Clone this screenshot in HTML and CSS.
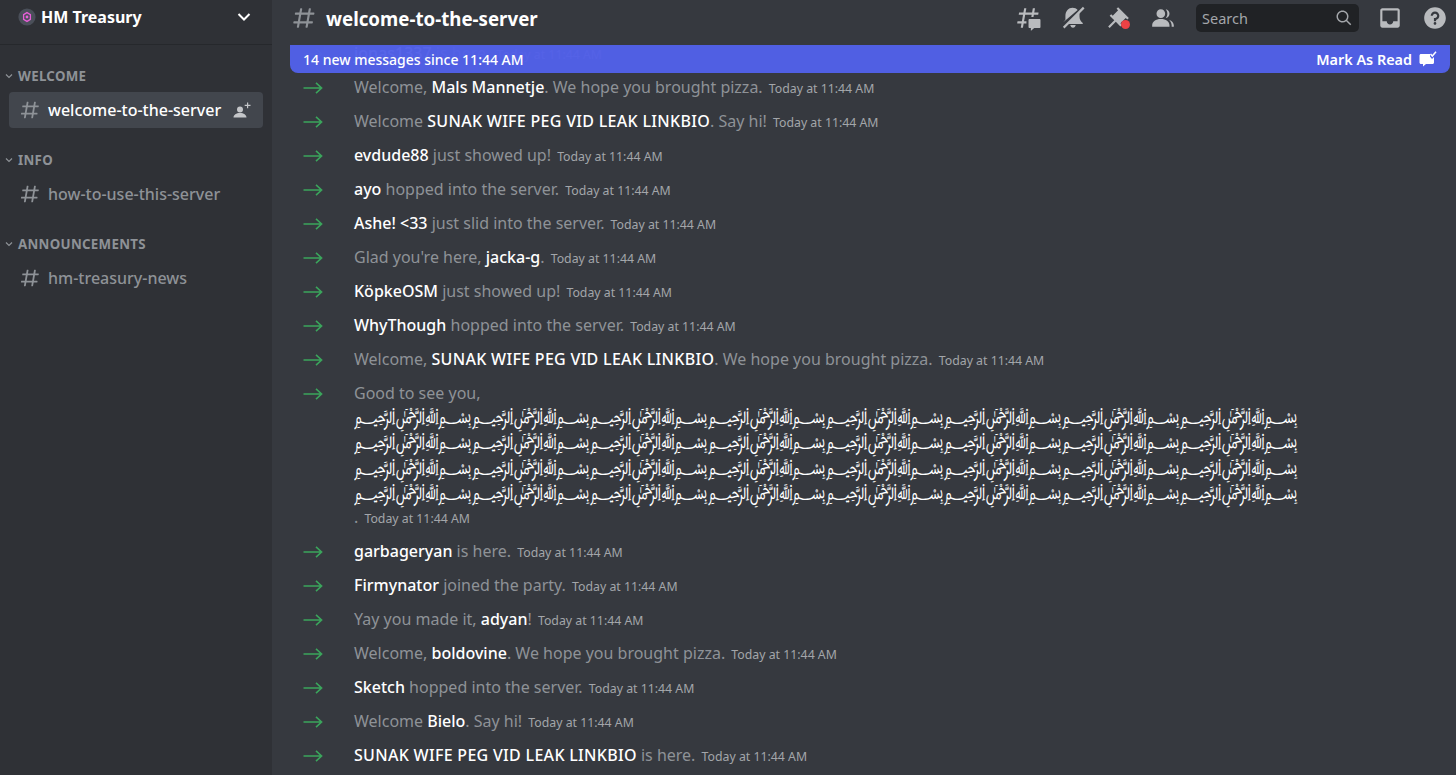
FILE: index.html
```html
<!DOCTYPE html>
<html lang="en">
<head>
    <meta charset="UTF-8">
    <title>welcome-to-the-server</title>
    <link rel="stylesheet" href="styles.css">
</head>
<body>
    <svg width="0" height="0" class="defs">
        <symbol id="hash" viewBox="0 0 24 24"><path fill="currentColor" fill-rule="evenodd" d="M5.88657 21C5.57547 21 5.3399 20.7189 5.39427 20.4126L6.00001 17H2.59511C2.28449 17 2.04905 16.7198 2.10259 16.4138L2.27759 15.4138C2.31946 15.1746 2.52722 15 2.77011 15H6.35001L7.41001 9H4.00511C3.69449 9 3.45905 8.71977 3.51259 8.41381L3.68759 7.41381C3.72946 7.17456 3.93722 7 4.18011 7H7.76001L8.39677 3.41262C8.43914 3.17391 8.64664 3 8.88907 3H9.87344C10.1845 3 10.4201 3.28107 10.3657 3.58738L9.76001 7H15.76L16.3968 3.41262C16.4391 3.17391 16.6466 3 16.8891 3H17.8734C18.1845 3 18.4201 3.28107 18.3657 3.58738L17.76 7H21.1649C21.4755 7 21.711 7.28023 21.6574 7.58619L21.4824 8.58619C21.4406 8.82544 21.2328 9 20.9899 9H17.41L16.35 15H19.7549C20.0655 15 20.301 15.2802 20.2474 15.5862L20.0724 16.5862C20.0306 16.8254 19.8228 17 19.5799 17H16L15.3632 20.5874C15.3209 20.8261 15.1134 21 14.8709 21H13.8866C13.5755 21 13.3399 20.7189 13.3943 20.4126L14 17H8.00001L7.36325 20.5874C7.32088 20.8261 7.11337 21 6.87094 21H5.88657ZM9.41045 9L8.35045 15H14.3504L15.4104 9H9.41045Z"/></symbol>
        <symbol id="arrow" viewBox="0 0 20 12"><path fill="none" stroke="currentColor" stroke-width="1.6" d="M0.5 6H18.5M13 0.8L18.6 6L13 11.2"/></symbol>
        <symbol id="caret" viewBox="0 0 8 6"><path fill="none" stroke="currentColor" stroke-width="1.2" d="M1 1.5L4 4.5L7 1.5"/></symbol>
    </svg>

    <div class="app">
        <aside class="sidebar">
            <div class="guild-header">
                <svg class="guild-icon" viewBox="0 0 18 18" width="18" height="18">
                    <circle cx="9" cy="9" r="8.6" fill="#4a4f59"/>
                    <path fill="none" stroke="#e85fd8" stroke-width="1.3" d="M9 4.6L12.4 6.6V11.4L9 13.4L5.6 11.4V6.6Z"/>
                    <circle cx="9" cy="9" r="1.4" fill="#e85fd8"/>
                </svg>
                <span class="guild-name">HM Treasury</span>
                <svg class="guild-chevron" viewBox="0 0 14 10" width="14" height="10"><path fill="none" stroke="#fff" stroke-width="2" d="M1.5 2L7 7.5L12.5 2"/></svg>
            </div>

            <div class="category"><svg class="caret"><use href="#caret"/></svg>WELCOME</div>
            <div class="channel active">
                <svg class="channel-hash"><use href="#hash"/></svg>
                <span class="channel-name">welcome-to-the-server</span>
                <svg class="invite" viewBox="0 0 18 16" width="18" height="16"><path fill="#c4c6c9" d="M7 4.5a3 3 0 1 1 0 6a3 3 0 0 1 0-6ZM0.5 15.5C0.5 12.8 3.2 11 7 11s6.5 1.800 6.500 4.500ZM14 0.500h1.200v2.300h2.300v1.200h-2.300v2.300H14V4H11.700V2.800H14Z"/></svg>
            </div>

            <div class="category"><svg class="caret"><use href="#caret"/></svg>INFO</div>
            <div class="channel">
                <svg class="channel-hash"><use href="#hash"/></svg>
                <span class="channel-name">how-to-use-this-server</span>
            </div>

            <div class="category"><svg class="caret"><use href="#caret"/></svg>ANNOUNCEMENTS</div>
            <div class="channel">
                <svg class="channel-hash"><use href="#hash"/></svg>
                <span class="channel-name">hm-treasury-news</span>
            </div>
        </aside>

        <main class="main">
            <header class="topbar">
                <svg class="topbar-hash"><use href="#hash"/></svg>
                <h1 class="topbar-title">welcome-to-the-server</h1>
                <div class="toolbar">
                    <svg class="tool" viewBox="0 0 24 24"><path fill="currentColor" d="M5.43309 21C5.35842 21 5.30189 20.9325 5.31494 20.859L5.99991 17H2.14274C2.06819 17 2.01168 16.9327 2.02453 16.8593L2.33253 15.0993C2.34258 15.0419 2.39244 15 2.45074 15H6.34991L7.40991 9H3.55274C3.47819 9 3.42168 8.93274 3.43453 8.85931L3.74253 7.09931C3.75258 7.04189 3.80244 7 3.86074 7H7.75991L8.45234 3.09903C8.46251 3.04174 8.51231 3 8.57049 3H10.3267C10.4014 3 10.4579 3.06746 10.4449 3.14097L9.75991 7H15.7599L16.4523 3.09903C16.4625 3.04174 16.5123 3 16.5705 3H18.3267C18.4014 3 18.4579 3.06746 18.4449 3.14097L17.7599 7H21.6171C21.6916 7 21.7481 7.06725 21.7353 7.14069L21.4273 8.90069C21.4172 8.95811 21.3674 9 21.3091 9H17.4099L17.0495 11.04H15.05L15.4104 9H9.41035L8.35035 15H10.5599V17H7.99991L7.30749 20.901C7.29732 20.9583 7.24752 21 7.18934 21H5.43309Z"/><path fill="currentColor" d="M13.4399 12.96C12.9097 12.96 12.4799 13.3898 12.4799 13.92V20.2213C12.4799 20.7515 12.9097 21.1813 13.4399 21.1813H14.3999C14.5325 21.1813 14.6399 21.2887 14.6399 21.4213V23.4597C14.6399 23.6677 14.8865 23.7773 15.0408 23.6378L17.4858 21.4289C17.6622 21.2695 17.8916 21.1813 18.1294 21.1813H22.5599C23.0901 21.1813 23.5199 20.7515 23.5199 20.2213V13.92C23.5199 13.3898 23.0901 12.96 22.5599 12.96H13.4399Z"/></svg>
                    <svg class="tool" viewBox="0 0 24 24"><path fill="currentColor" d="M21.178 1.707L22.592 3.121L4.121 21.593L2.707 20.178Z"/><path fill="currentColor" d="M18 10.500V7.100L7.600 17.500H21V16.500C19.200 15 18 13 18 10.500ZM16.300 4.600C15.200 3.300 13.500 2.500 11.500 2.500C8 2.500 5 5.500 5 10V13.500L3 16L16.300 4.600ZM9.500 18.500C9.700 20 10.700 21 12 21C13.300 21 14.300 20 14.500 18.500Z"/></svg>
                    <span class="pin-wrap">
                        <svg class="tool" viewBox="0 0 24 24"><path fill="currentColor" d="M22 12L12.101 2.101L10.686 3.514L12.101 4.929L7.151 9.878V9.880L5.736 8.465L4.322 9.880L8.565 14.122L2.908 19.778L4.322 21.192L9.979 15.536L14.222 19.778L15.636 18.364L14.222 16.950L19.171 12H19.172L20.586 13.414L22 12Z"/></svg>
                        <span class="pin-dot"></span>
                    </span>
                    <svg class="tool" viewBox="0 0 24 24"><path fill="currentColor" d="M14 8.006C14 10.211 12.206 12.006 10 12.006C7.795 12.006 6 10.211 6 8.006C6 5.801 7.794 4.006 10 4.006C12.206 4.006 14 5.801 14 8.006ZM2 19.006C2 15.473 5.29 13.006 10 13.006C14.711 13.006 18 15.473 18 19.006V20.006H2V19.006Z"/><path fill="currentColor" d="M20 20.006H22V19.006C22 16.443 20.270 14.442 17.521 13.535C19.062 14.913 20 16.806 20 19.006V20.006Z"/><path fill="currentColor" d="M14.883 11.908C16.666 11.504 18 9.908 18 8.006C18 5.969 16.469 4.282 14.497 4.037C15.432 5.095 16 6.485 16 8.006C16 9.449 15.489 10.774 14.638 11.810C14.720 11.842 14.802 11.874 14.883 11.908Z"/></svg>
                    <div class="search">
                        <span>Search</span>
                        <svg viewBox="0 0 24 24" width="18" height="18"><path fill="currentColor" d="M21.707 20.293L16.314 14.9C17.403 13.504 18 11.799 18 10C18 7.863 17.167 5.854 15.656 4.344C14.146 2.832 12.137 2 10 2C7.863 2 5.854 2.832 4.344 4.344C2.833 5.854 2 7.863 2 10C2 12.137 2.833 14.146 4.344 15.656C5.854 17.168 7.863 18 10 18C11.799 18 13.504 17.404 14.9 16.314L20.293 21.706L21.707 20.293ZM10 16C8.397 16 6.891 15.376 5.758 14.243C4.624 13.11 4 11.603 4 10C4 8.398 4.624 6.891 5.758 5.758C6.891 4.624 8.397 4 10 4C11.603 4 13.109 4.624 14.242 5.758C15.376 6.891 16 8.398 16 10C16 11.603 15.376 13.11 14.242 14.243C13.109 15.376 11.603 16 10 16Z"/></svg>
                    </div>
                    <svg class="tool inbox" viewBox="0 0 24 24"><path fill="currentColor" d="M19 3H4.99C3.88 3 3.01 3.89 3.01 5L3 19C3 20.1 3.88 21 4.99 21H19C20.1 21 21 20.1 21 19V5C21 3.89 20.1 3 19 3ZM19 15H15C15 16.66 13.65 18 12 18C10.35 18 9 16.66 9 15H4.99V5H19V15Z"/></svg>
                    <svg class="tool help" viewBox="0 0 24 24"><path fill="currentColor" d="M12 2C6.486 2 2 6.487 2 12C2 17.515 6.486 22 12 22C17.514 22 22 17.515 22 12C22 6.487 17.514 2 12 2ZM12 18.250C11.310 18.250 10.750 17.691 10.750 17C10.750 16.310 11.310 15.750 12 15.750C12.690 15.750 13.250 16.310 13.250 17C13.250 17.691 12.690 18.250 12 18.250ZM13 13.875V15H11V12H12C13.104 12 14 11.103 14 10C14 8.896 13.104 8 12 8C10.896 8 10 8.896 10 10H8C8 7.795 9.795 6 12 6C14.205 6 16 7.795 16 10C16 11.861 14.723 13.429 13 13.875Z"/></svg>
                </div>
            </header>

            <section class="chat">
                <div class="banner">
                    <span>14 new messages since 11:44 AM</span>
                    <span class="mark-read">Mark As Read
                        <svg viewBox="0 0 18 16" width="18" height="16"><path fill="#fff" d="M2 3H11V5.500L13 8L15 6V11.500C15 12.300 14.400 13 13.500 13H7L4 15.500V13H2C1.200 13 0.500 12.300 0.500 11.500V4.500C0.500 3.700 1.200 3 2 3Z"/><path fill="none" stroke="#fff" stroke-width="1.500" d="M11.500 3L13.300 5L17 0.800"/></svg>
                    </span>
                </div>
                <div class="messages">
                    <div class="msg"><svg class="join"><use href="#arrow"/></svg><div class="body"><b>jonas1337</b> is here. <time>Today at 11:44 AM</time></div></div>
                    <div class="msg"><svg class="join"><use href="#arrow"/></svg><div class="body">Welcome, <b>Mals Mannetje</b>. We hope you brought pizza. <time>Today at 11:44 AM</time></div></div>
                    <div class="msg"><svg class="join"><use href="#arrow"/></svg><div class="body">Welcome <b class="caps">SUNAK WIFE PEG VID LEAK LINKBIO</b>. Say hi! <time>Today at 11:44 AM</time></div></div>
                    <div class="msg"><svg class="join"><use href="#arrow"/></svg><div class="body"><b>evdude88</b> just showed up! <time>Today at 11:44 AM</time></div></div>
                    <div class="msg"><svg class="join"><use href="#arrow"/></svg><div class="body"><b>ayo</b> hopped into the server. <time>Today at 11:44 AM</time></div></div>
                    <div class="msg"><svg class="join"><use href="#arrow"/></svg><div class="body"><b>Ashe! &lt;33</b> just slid into the server. <time>Today at 11:44 AM</time></div></div>
                    <div class="msg"><svg class="join"><use href="#arrow"/></svg><div class="body">Glad you're here, <b>jacka-g</b>. <time>Today at 11:44 AM</time></div></div>
                    <div class="msg"><svg class="join"><use href="#arrow"/></svg><div class="body"><b>KöpkeOSM</b> just showed up! <time>Today at 11:44 AM</time></div></div>
                    <div class="msg"><svg class="join"><use href="#arrow"/></svg><div class="body"><b>WhyThough</b> hopped into the server. <time>Today at 11:44 AM</time></div></div>
                    <div class="msg"><svg class="join"><use href="#arrow"/></svg><div class="body">Welcome, <b class="caps">SUNAK WIFE PEG VID LEAK LINKBIO</b>. We hope you brought pizza. <time>Today at 11:44 AM</time></div></div>
                    <div class="msg"><svg class="join"><use href="#arrow"/></svg><div class="body">Good to see you,
                        <div class="bismillah"><div>﷽﷽﷽﷽﷽﷽﷽﷽</div><div>﷽﷽﷽﷽﷽﷽﷽﷽</div><div>﷽﷽﷽﷽﷽﷽﷽﷽</div><div>﷽﷽﷽﷽﷽﷽﷽﷽</div></div>
                        . <time>Today at 11:44 AM</time></div></div>
                    <div class="msg"><svg class="join"><use href="#arrow"/></svg><div class="body"><b>garbageryan</b> is here. <time>Today at 11:44 AM</time></div></div>
                    <div class="msg"><svg class="join"><use href="#arrow"/></svg><div class="body"><b>Firmynator</b> joined the party. <time>Today at 11:44 AM</time></div></div>
                    <div class="msg"><svg class="join"><use href="#arrow"/></svg><div class="body">Yay you made it, <b>adyan</b>! <time>Today at 11:44 AM</time></div></div>
                    <div class="msg"><svg class="join"><use href="#arrow"/></svg><div class="body">Welcome, <b>boldovine</b>. We hope you brought pizza. <time>Today at 11:44 AM</time></div></div>
                    <div class="msg"><svg class="join"><use href="#arrow"/></svg><div class="body"><b>Sketch</b> hopped into the server. <time>Today at 11:44 AM</time></div></div>
                    <div class="msg"><svg class="join"><use href="#arrow"/></svg><div class="body">Welcome <b>Bielo</b>. Say hi! <time>Today at 11:44 AM</time></div></div>
                    <div class="msg"><svg class="join"><use href="#arrow"/></svg><div class="body"><b class="caps">SUNAK WIFE PEG VID LEAK LINKBIO</b> is here. <time>Today at 11:44 AM</time></div></div>
                </div>
            </section>
        </main>
    </div>
</body>
</html>
```

FILE: styles.css
```css
html, body {
    margin: 0;
    height: 100%;
    overflow: hidden;
}
body {
    font-family: "Noto Sans", "DejaVu Sans", sans-serif;
    font-size: 16px;
    color: #dcddde;
    background-color: #36393f;
}
.defs {
    position: absolute;
}
.app {
    display: flex;
    height: 775px;
}

/* sidebar */
.sidebar {
    width: 272px;
    flex-shrink: 0;
    background-color: #2f3136;
}
.guild-header {
    height: 45px;
    box-sizing: border-box;
    display: flex;
    align-items: center;
    padding: 0 21px 10px 18px;
    border-bottom: 1px solid #26282c;
}
.guild-icon {
    margin-right: 5px;
}
.guild-name {
    flex: 1;
    color: #fff;
    font-size: 16px;
    font-weight: 700;
}
.category {
    height: 47px;
    box-sizing: border-box;
    display: flex;
    align-items: center;
    padding: 15px 0 0 5px;
    gap: 5px;
    color: #8e9297;
    font-size: 13.3px;
    font-weight: 700;
    letter-spacing: 0.3px;
}
.caret {
    width: 8px;
    height: 6px;
}
.channel {
    height: 36px;
    box-sizing: border-box;
    margin: 0 9px 1px;
    padding: 0 10px 1px;
    display: flex;
    align-items: center;
    border-radius: 4px;
    color: #8e9297;
}
.channel.active {
    background-color: #42464d;
    color: #fff;
}
.channel-hash {
    width: 22px;
    height: 22px;
    margin-right: 7px;
    color: #8e9297;
}
.channel-name {
    flex: 1;
    font-size: 16px;
    font-weight: 500;
}
.invite {
    margin-right: 2px;
}

/* main column */
.main {
    flex: 1;
    min-width: 0;
    display: flex;
    flex-direction: column;
}
.topbar {
    height: 45px;
    box-sizing: border-box;
    flex-shrink: 0;
    display: flex;
    align-items: center;
    padding: 0 8px 9px 19px;
}
.topbar-hash {
    width: 26px;
    height: 26px;
    color: #8e9297;
    margin-right: 9px;
}
.topbar-title {
    margin: 0;
    flex: 1;
    color: #fff;
    font-size: 18.7px;
    font-weight: 700;
}
.toolbar {
    display: flex;
    align-items: center;
    color: #b9bbbe;
}
.tool {
    width: 26px;
    height: 26px;
    display: block;
}
.toolbar > .tool, .pin-wrap {
    margin-right: 19px;
}
.pin-wrap {
    position: relative;
}
.pin-dot {
    position: absolute;
    right: 1px;
    bottom: 2px;
    width: 9px;
    height: 9px;
    border-radius: 50%;
    background-color: #ed4245;
}
.search {
    width: 163px;
    height: 28px;
    box-sizing: border-box;
    margin: 0 18px 0 1px;
    padding: 0 6px 0 6px;
    display: flex;
    align-items: center;
    justify-content: space-between;
    background-color: #202225;
    border-radius: 5px;
    font-size: 14.5px;
    color: #a3a6aa;
}
.toolbar > .help {
    margin-right: 0;
}

/* chat */
.chat {
    flex: 1;
    position: relative;
    overflow: hidden;
}
.banner {
    position: absolute;
    top: 0;
    left: 18px;
    right: 6px;
    height: 28px;
    box-sizing: border-box;
    padding: 0 13px;
    display: flex;
    align-items: center;
    justify-content: space-between;
    background-color: rgba(82, 96, 232, 0.97);
    border-radius: 0 0 8px 8px;
    color: #fff;
    font-size: 14px;
    font-weight: 500;
}
.mark-read {
    display: flex;
    align-items: center;
    gap: 7px;
    font-weight: 600;
    font-size: 14.4px;
}
.messages {
    margin-top: -9px;
}
.msg {
    display: flex;
    padding: 6px 0 6px 31px;
    line-height: 22px;
    color: #8e9297;
}
.join {
    width: 20px;
    height: 12px;
    margin: 6px 31px 0 0;
    flex-shrink: 0;
    color: #3ba55c;
}
.body b {
    font-weight: 500;
    color: #fff;
}
.body b.caps {
    letter-spacing: 0.3px;
}
.body time {
    font-size: 12.3px;
    line-height: 1;
    color: #a3a6aa;
    margin-left: 2px;
}
.bismillah {
    color: #fff;
    font-family: "DejaVu Sans", "Noto Sans", sans-serif;
    font-size: 15.32px;
    line-height: 25.4px;
    white-space: nowrap;
}
.bismillah div {
    transform: scaleY(1.45);
}
```
